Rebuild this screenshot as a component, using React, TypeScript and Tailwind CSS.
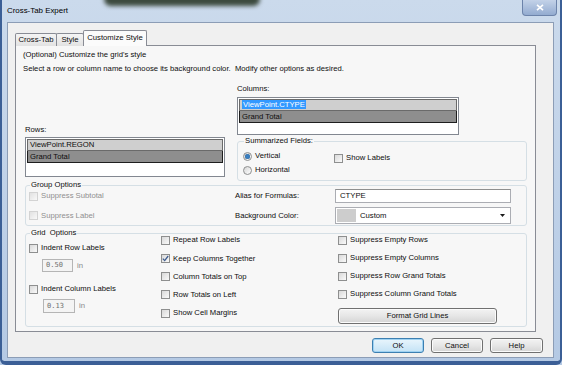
import React from 'react'

const FONT = "font-['Liberation_Sans',Arial,sans-serif]"

function Check({ label, checked, disabled }: { label: string; checked?: boolean; disabled?: boolean }) {
  return (
    <div className="flex h-[10px] items-center whitespace-nowrap">
      <span
        className={`flex h-[9px] w-[9px] shrink-0 items-center justify-center border bg-linear-to-br from-[#d9d9d9] to-[#fafafa] ${
          disabled ? 'border-[#c4c4c4] opacity-70' : 'border-[#8e8f8f]'
        }`}
      >
        {checked && (
          <svg width="7" height="7" viewBox="0 0 7 7">
            <path d="M0.8 3.6 L2.7 5.6 L6.2 1" stroke="#3e5c8e" strokeWidth="1.3" fill="none" />
          </svg>
        )}
      </span>
      <span className={`ml-[3px] ${disabled ? 'text-[#8f8f8f]' : ''}`}>{label}</span>
    </div>
  )
}

function Radio({ label, selected }: { label: string; selected?: boolean }) {
  return (
    <div className="flex h-[10px] items-center whitespace-nowrap">
      <span className="flex h-[9px] w-[9px] items-center justify-center rounded-full border border-[#8e8f8f] bg-linear-to-br from-[#d6d6d6] to-white">
        {selected && <span className="h-[5px] w-[5px] rounded-full bg-[#3a7fc1] shadow-[inset_0_0_1px_#1c4a7a]" />}
      </span>
      <span className="ml-[3px]">{label}</span>
    </div>
  )
}

function Btn({ label, focused, className }: { label: string; focused?: boolean; className: string }) {
  return (
    <div
      className={`flex items-center justify-center rounded-[3px] border ${className} ${
        focused
          ? 'border-[#3c7fb1] bg-linear-to-b from-[#e9f5fc] to-[#c4e3f6] shadow-[inset_0_0_0_1px_#9fd2f2]'
          : 'border-[#707070] bg-linear-to-b from-[#f3f3f3] via-[#e6e6e6] to-[#d4d4d4] shadow-[inset_0_0_0_1px_#fbfbfb]'
      }`}
    >
      {label}
    </div>
  )
}

export default function App() {
  return (
    <div className={`relative h-[365px] w-[562px] overflow-hidden bg-linear-to-b from-[#cbdaec] to-[#b4c9e4] text-[7.7px] text-[#0d0d0d] ${FONT}`}>
      {/* window of another app showing through the glass */}
      <div className="absolute -top-[7px] left-[104px] h-[13px] w-[156px] rounded-full bg-[#3c4a3e] blur-[2px]" />

      <div className="flex h-[22px] items-center pl-[7px] text-[7.9px] text-black">Cross-Tab Expert</div>
      <div className="absolute right-[5px] top-0 flex h-[16px] w-[35px] items-center justify-center rounded-b-[4px] border border-t-0 border-[#6c83aa] bg-linear-to-b from-[#c3d2e8] to-[#93abd0]">
        <svg width="8" height="7" viewBox="0 0 8 7">
          <path d="M1 0.8 L7 6.2 M7 0.8 L1 6.2" stroke="#ffffff" strokeWidth="1.6" />
        </svg>
      </div>

      <div className="ml-[7px] h-[336px] w-[547px] border border-[#8c9db6] bg-[#f0f0f0] pt-[7px]">
        {/* tabs */}
        <div className="ml-[7px] flex h-[16px] items-end">
          <div className="flex h-[13px] w-[42px] items-center justify-center rounded-t-[2px] border border-b-0 border-[#898c95] bg-linear-to-b from-[#f4f4f4] to-[#e2e2e2]">
            Cross-Tab
          </div>
          <div className="-ml-px flex h-[13px] w-[28px] items-center justify-center rounded-t-[2px] border border-b-0 border-[#898c95] bg-linear-to-b from-[#f4f4f4] to-[#e2e2e2]">
            Style
          </div>
          <div className="relative z-10 -ml-px flex h-[16px] w-[64px] items-center justify-center rounded-t-[2px] border border-b-0 border-[#898c95] bg-[#fbfbfb] pb-[2px]">
            Customize Style
          </div>
        </div>

        {/* panel */}
        <div className="-mt-px ml-[7px] h-[287px] w-[521px] border border-[#898c95] bg-[#f7f7f7]">
          <div className="ml-[7px] mt-[4px] leading-[10px]">(Optional) Customize the grid's style</div>
          <div className="ml-[7px] mt-[4px] leading-[10px]">
            Select a row or column name to choose its background color.&nbsp; Modify other options as desired.
          </div>

          <div className="ml-[9px] flex h-[107px]">
            <div className="flex w-[200px] flex-col">
              <div className="mt-[51px] leading-[10px]">Rows:</div>
              <div className="mt-[2px] h-[40px] border border-[#828790] bg-white p-px">
                <div className="h-[12px] border border-[#6a6a6a] bg-[#cfcfcf] pl-[2px] leading-[10px]">ViewPoint.REGON</div>
                <div className="h-[12px] border border-t-0 border-[#1e1e1e] bg-[#8e8e8e] pl-[2px] leading-[11px]">Grand Total</div>
              </div>
            </div>

            <div className="ml-[12px] flex flex-col">
              <div className="mt-[10px] leading-[10px]">Columns:</div>
              <div className="mt-[3px] h-[38px] w-[222px] border border-[#828790] bg-white p-px">
                <div className="h-[12px] border border-[#6a6a6a] bg-[#cfcfcf] pl-[2px] leading-[10px]">
                  <span className="bg-[#3399ff] px-px text-white">ViewPoint.CTYPE</span>
                </div>
                <div className="h-[12px] border border-t-0 border-[#1e1e1e] bg-[#8e8e8e] pl-[2px] leading-[11px]">Grand Total</div>
              </div>
              <fieldset className="mt-[2px] h-[44px] w-[290px] rounded-[3px] border border-[#d5dfe5]">
                <legend className="ml-[6px] px-px leading-[8px]">Summarized Fields:</legend>
                <div className="flex pl-[5px]">
                  <div className="flex w-[91px] flex-col">
                    <div className="mt-[6px]">
                      <Radio label="Vertical" selected />
                    </div>
                    <div className="mt-[4px]">
                      <Radio label="Horizontal" />
                    </div>
                  </div>
                  <div className="mt-[8px]">
                    <Check label="Show Labels" />
                  </div>
                </div>
              </fieldset>
            </div>
          </div>

          {/* group options */}
          <fieldset className="ml-[9px] w-[502px] rounded-[3px] border border-[#d5dfe5] pb-px">
            <legend className="ml-[4px] px-px leading-[8px]">Group Options</legend>
            <div className="grid grid-cols-[209px_100px_176px] grid-rows-[14px_17px] items-center gap-y-[4px]">
              <div className="pl-[3px]">
                <Check label="Suppress Subtotal" disabled />
              </div>
              <div>Alias for Formulas:</div>
              <div className="flex h-[14px] items-center border border-[#abadb3] border-t-[#8e8f8f] bg-white pl-[4px]">CTYPE</div>
              <div className="pl-[3px]">
                <Check label="Suppress Label" disabled />
              </div>
              <div>Background Color:</div>
              <div className="flex h-[17px] items-center border border-[#abadb3] bg-white p-px">
                <span className="h-[13px] w-[19px] bg-[#cdcdcd]" />
                <span className="ml-[4px] flex-1">Custom</span>
                <svg width="5" height="3" viewBox="0 0 5 3" className="mr-[4px]">
                  <path d="M0 0 H5 L2.5 3 Z" fill="#1b1b1b" />
                </svg>
              </div>
            </div>
          </fieldset>

          {/* grid options */}
          <fieldset className="ml-[9px] mt-[5px] w-[502px] rounded-[3px] border border-[#d5dfe5] pb-[2px]">
            <legend className="ml-[4px] px-px leading-[4px]">Grid&nbsp; Options</legend>
            <div className="flex">
              <div className="flex w-[135px] flex-col pl-[3px]">
                <div className="mt-[8px]">
                  <Check label="Indent Row Labels" />
                </div>
                <div className="ml-[13px] mt-[6px] flex items-center">
                  <span className="flex h-[13px] w-[31px] items-center border border-[#b5b5b5] bg-[#f4f4f4] pl-[3px] font-['DejaVu_Sans_Mono',monospace] text-[7px] text-[#707070]">
                    0.50
                  </span>
                  <span className="ml-[4px] text-[#8a8a8a]">in</span>
                </div>
                <div className="mt-[12px]">
                  <Check label="Indent Column Labels" />
                </div>
                <div className="ml-[14px] mt-[5px] flex items-center">
                  <span className="flex h-[14px] w-[32px] items-center border border-[#b5b5b5] bg-[#f4f4f4] pl-[3px] font-['DejaVu_Sans_Mono',monospace] text-[7px] text-[#707070]">
                    0.13
                  </span>
                  <span className="ml-[4px] text-[#8a8a8a]">in</span>
                </div>
              </div>

              <div className="flex w-[177px] flex-col gap-[8.3px]">
                <Check label="Repeat Row Labels" />
                <Check label="Keep Columns Together" checked />
                <Check label="Column Totals on Top" />
                <Check label="Row Totals on Left" />
                <Check label="Show Cell Margins" />
              </div>

              <div className="flex flex-col gap-[8px]">
                <Check label="Suppress Empty Rows" />
                <Check label="Suppress Empty Columns" />
                <Check label="Suppress Row Grand Totals" />
                <Check label="Suppress Column Grand Totals" />
                <Btn label="Format Grid Lines" className="mt-[1px] h-[16px] w-[159px]" />
              </div>
            </div>
          </fieldset>
        </div>

        <div className="mt-[6px] flex justify-end gap-[7px] pr-[10px]">
          <Btn label="OK" focused className="h-[15px] w-[52px]" />
          <Btn label="Cancel" className="h-[15px] w-[52px]" />
          <Btn label="Help" className="h-[15px] w-[53px]" />
        </div>
      </div>

      {/* glass frame edges */}
      <div className="pointer-events-none absolute inset-0 rounded-b-[6px] border-x-[2px] border-b-[4px] border-[#3b5f96]" />
    </div>
  )
}
